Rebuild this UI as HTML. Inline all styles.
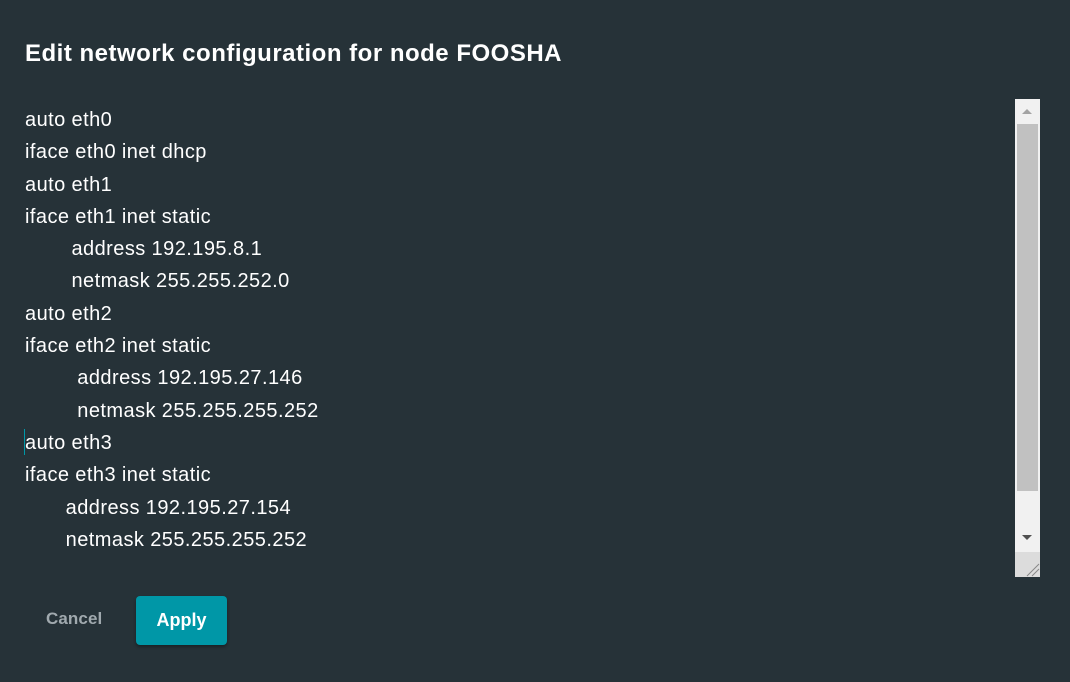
<!DOCTYPE html>
<html><head><meta charset="utf-8"><style>
html,body{margin:0;padding:0;}
body{width:1070px;height:682px;background:#263238;font-family:"Liberation Sans",sans-serif;color:#fff;position:relative;overflow:hidden;}
h1{position:absolute;left:25px;top:38px;margin:0;font-size:24px;font-weight:bold;letter-spacing:0.5px;line-height:32px;}
.txt{position:absolute;left:25px;top:104px;font-size:20px;line-height:32.3px;white-space:pre;letter-spacing:0.45px;word-spacing:-0.2px;}
.sb{position:absolute;left:1015px;top:99px;width:25px;height:478px;background:#f1f1f1;}
.thumb{position:absolute;left:2px;top:25px;width:21px;height:367px;background:#c1c1c1;}
.up{position:absolute;left:7px;top:10px;width:0;height:0;border-left:5px solid transparent;border-right:5px solid transparent;border-bottom:5px solid #a3a3a3;}
.dn{position:absolute;left:7px;top:436px;width:0;height:0;border-left:5px solid transparent;border-right:5px solid transparent;border-top:5px solid #505050;}
.rs{position:absolute;left:0;top:453px;width:25px;height:25px;background:#dcdcdc;}
.cancel{position:absolute;left:46px;top:609px;font-size:17px;font-weight:bold;color:#a0a9ae;letter-spacing:0.1px;}
.apply{position:absolute;left:136px;top:596px;width:91px;height:49px;background:#0097a7;border-radius:4px;box-shadow:0 2px 3px rgba(0,0,0,.35);color:#fff;font-size:18px;font-weight:bold;text-align:center;line-height:49px;}
.cur{position:absolute;left:24px;top:429px;width:1px;height:26px;background:#0097a7;}
</style></head><body>
<h1>Edit network configuration for node FOOSHA</h1>
<div class="txt">auto eth0
iface eth0 inet dhcp
auto eth1
iface eth1 inet static
        address 192.195.8.1
        netmask 255.255.252.0
auto eth2
iface eth2 inet static
         address 192.195.27.146
         netmask 255.255.255.252
auto eth3
iface eth3 inet static
       address 192.195.27.154
       netmask 255.255.255.252</div>
<div class="cur"></div>
<div class="sb"><div class="up"></div><div class="thumb"></div><div class="dn"></div>
<div class="rs"><svg width="25" height="25"><path d="M12 24L24 12M17 24L24 17" stroke="#888" stroke-width="1"/></svg></div></div>
<div class="cancel">Cancel</div>
<div class="apply">Apply</div>
</body></html>
